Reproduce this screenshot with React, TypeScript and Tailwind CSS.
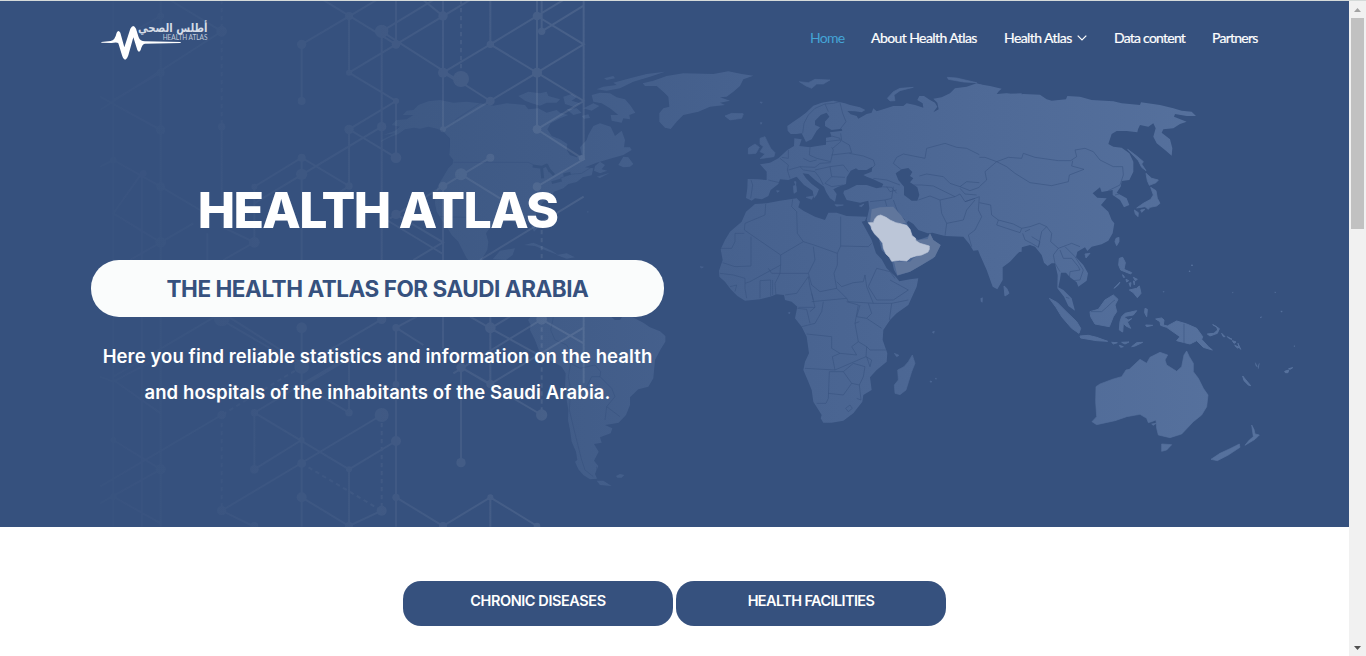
import React from "react";

type Circle = [number, number, number];

const topLines =
  "M40 0V780M125 520V780M182 0V780M365 380V680M322 700V780M463 560V727M605 133V303M605 473V780M747 48V218M747 388V560M845 94V780M888 0V133M888 303V473M1029 0V388M1029 560V780M1171 0V133M1311 0V388M1325 0V94M1451 0V480" +
  "M670 0L888 133M605 133L830 0M845 94L1000 0M845 94L1171 303M1029 218L1083 250M747 218L1110 0M747 218L888 303L747 388L888 473M1029 218L1171 133L1311 218L1029 388M1171 133L1390 0M1311 218L1451 303L1311 388L1451 478L1311 560M1311 218L1451 133L1311 48L1390 0M1325 94L1451 17M970 0L1029 48L1110 0" +
  "M845 380L463 610M463 560L605 473L747 558L700 590M1171 473L870 655M1083 523L1200 595M860 660L1029 762M888 643L1029 727L940 780M1451 590L1140 780M182 727L280 670M182 727L90 780M365 680L463 727L370 780M0 330L365 94L210 0M0 290L182 390M0 150L182 48M40 480L182 560L300 630M0 500L40 480M125 520L40 640L182 727M182 218L40 300";
const bottomLines =
  "M40 170V800M125 170V800M182 170V800M463 458V628M605 203V800M747 290V458M747 628V800M888 203V800M1029 170V265M1083 322V608M1171 170V372M1171 712V800M1451 170V370" +
  "M365 180L605 320L845 178M365 465L0 680M345 170L40 350M385 170L605 310M888 203L950 170M888 203L970 255M1110 170L1171 205L1230 170M1060 340L1325 178L1451 250M1171 205L1325 290M1083 322L1325 465M1083 322L1171 372L1451 203M463 458L747 628L888 543M747 458L605 373L747 290M463 458L605 373M463 628L605 540M605 380L790 270M845 465L365 752L463 800M605 712L747 798L845 752M888 712L1029 798L1171 712L1311 798M40 360L182 460M40 540L182 628M0 730L182 628M0 350L40 365L182 290M40 710L182 790";

const topNodes: Circle[] = [
  [747, 48, 12], [605, 133, 14], [605, 303, 12], [845, 94, 20], [888, 133, 13], [747, 218, 9], [888, 303, 9],
  [747, 388, 14], [845, 380, 14], [888, 473, 16], [1029, 48, 14], [1029, 218, 15], [1083, 237, 24], [1171, 133, 11],
  [1171, 303, 13], [1311, 48, 13], [1325, 94, 11], [1311, 218, 15], [1311, 388, 13], [1029, 388, 9], [1171, 473, 12],
  [1083, 523, 18], [1029, 558, 13], [1311, 560, 13], [1445, 474, 9], [605, 473, 12], [605, 523, 17], [747, 558, 11],
  [463, 560, 9], [463, 727, 16], [888, 643, 14], [365, 94, 16], [365, 380, 11], [182, 48, 10], [182, 218, 12],
  [182, 390, 14], [182, 560, 13], [182, 727, 16], [40, 480, 10], [130, 520, 10],
];
const bottomNodes: Circle[] = [
  [365, 175, 24], [605, 203, 16], [605, 320, 22], [845, 178, 14], [888, 203, 11], [1171, 203, 16], [1325, 178, 16],
  [1083, 322, 14], [1171, 372, 12], [1325, 465, 17], [1083, 608, 14], [888, 373, 10], [747, 458, 11], [463, 458, 11],
  [365, 465, 13], [845, 465, 21], [605, 540, 9], [888, 543, 15], [605, 610, 13], [463, 628, 13], [747, 628, 9],
  [182, 628, 15], [605, 712, 15], [888, 712, 11], [1171, 712, 9], [845, 752, 15], [365, 752, 14], [1029, 798, 12],
  [747, 798, 12], [1311, 798, 10], [463, 798, 12], [40, 710, 10], [40, 540, 9],
];

function Network() {
  return (
    <>
      <mask id="net" maskUnits="userSpaceOnUse" x="0" y="0" width="1349" height="527">
        <g fill="none" stroke="#fff" strokeWidth="6">
          <g transform="translate(100 0) scale(.33333)">
            <path d={topLines} />
            <path d="M365 0V380M1083 0V237M1325 690V780" strokeDasharray="13 11" />
            {topNodes.map(([x, y, r]) => (
              <circle key={`${x}-${y}`} cx={x} cy={y} r={r} fill="#fff" stroke="none" />
            ))}
          </g>
          <g transform="translate(100 260) scale(.33333)">
            <path d={bottomLines} />
            <path d="M365 465V752M845 465V752M605 610L845 752M605 320L365 465M1325 178V465" strokeDasharray="13 11" />
            {bottomNodes.map(([x, y, r]) => (
              <circle key={`${x}-${y}`} cx={x} cy={y} r={r} fill="#fff" stroke="none" />
            ))}
          </g>
        </g>
      </mask>
      <linearGradient id="netFade" gradientUnits="userSpaceOnUse" x1="90" y1="0" x2="590" y2="0">
        <stop offset="0" stopColor="#fff" stopOpacity=".01" />
        <stop offset=".5" stopColor="#fff" stopOpacity=".04" />
        <stop offset="1" stopColor="#fff" stopOpacity=".095" />
      </linearGradient>
      <rect width="1349" height="527" fill="url(#netFade)" mask="url(#net)" />
    </>
  );
}

function WorldMap() {
  return (
    <>
      <mask id="land" maskUnits="userSpaceOnUse" x="0" y="0" width="1349" height="527">
        <g fill="#fff" strokeLinejoin="round">
          {/* North America and Greenland */}
          <g transform="translate(400 60) scale(.33333)">
            <path d="M-57 246L-30 232L-5 222L15 208L42 203L60 206L85 200L105 205L128 212L140 225L150 235L150 262L148 285L160 300L158 312L145 325L130 350L115 375L107 400L105 430L110 455L125 480L140 500L155 525L175 545L190 575L200 595L240 640L300 660L290 610L245 598L262 570L265 545L258 520L272 500L300 488L330 482L350 488L370 478L390 490L402 515L412 505L405 475L415 445L430 425L455 408L462 395L490 385L505 372L530 366L548 352L575 346L580 325L555 322L590 308L630 296L670 285L695 270L690 262L672 262L675 240L665 212L645 228L632 200L600 190L580 198L565 225L560 240L540 262L545 285L530 292L510 285L500 270L502 252L480 238L455 228L442 208L452 190L480 175L505 165L480 158L470 150L440 158L415 145L385 148L375 135L345 132L320 130L280 137L240 130L200 125L160 128L120 120L85 124L55 135L40 150L20 152L8 165L40 165L20 178L-10 180L-25 195L0 200L-15 212L-50 225L-15 220L-55 240Z" />
            <path d="M355 108L385 95L420 100L440 95L445 108L480 118L470 128L440 128L420 137L395 130L375 122ZM490 110L515 102L530 112L515 122L540 130L520 140L495 132ZM500 148L530 145L545 158L520 165ZM590 88L610 80L650 75L640 68L690 55L740 42L795 35L750 50L700 65L660 85L620 92ZM612 55L640 48L645 55L620 60ZM575 105L600 98L630 100L650 112L675 118L690 135L706 158L688 165L690 178L670 175L665 188L635 182L632 165L655 165L630 145L605 130L580 125ZM550 145L580 130L598 138L575 152ZM545 168L565 163L570 174L552 176ZM655 315L670 290L685 292L700 312L690 320L670 322ZM585 318L600 305L615 315L605 328L622 332L600 340L582 332ZM590 350L630 338L600 354Z" />
            <path d="M728 70L760 62L800 48L850 40L940 42L985 34L1025 42L1060 47L1030 58L1020 78L1000 95L980 110L960 112L990 122L960 128L975 135L930 140L895 155L850 165L830 185L812 207L795 203L778 185L778 160L790 145L808 140L805 110L790 95L770 78L735 78ZM975 168L990 162L1030 160L1020 172L990 180ZM1045 265L1060 255L1072 265L1065 280L1045 282Z" />
            <path d="M278 598L300 572L345 565L338 585L318 600ZM372 555L400 548L430 560L455 572L475 585L440 572L405 558ZM470 585L500 580L525 592L500 596ZM562 452L567 456L562 458Z" />
          </g>
          {/* South America */}
          <g transform="translate(540 310) scale(.33333)">
            <path d="M-20 10L-36 30L-28 45L-30 60L-15 90L0 130L30 150L65 170L77 190L75 230L80 270L85 300L84 330L90 360L95 395L108 425L112 450L105 455L115 478L130 495L150 508L172 506L165 492L175 468L162 452L176 425L162 402L185 398L180 382L212 370L217 355L195 345L215 342L236 338L258 315L270 285L270 262L295 238L325 230L340 205L345 150L362 118L376 95L376 78L360 64L330 52L310 38L275 20L250 15L240 30L225 30L215 22L200 10Z" />
            <path d="M170 512L190 512L215 528L180 525ZM228 498L240 492L253 495L245 503L232 503Z" />
          </g>
          {/* Europe, western Asia */}
          <g transform="translate(700 70) scale(.33333)">
            <path d="M262 168L280 155L300 142L318 128L340 107L365 98L400 92L435 100L450 105L480 112L496 120L485 127L465 124L442 123L452 133L470 138L475 146L500 132L515 128L520 115L530 124L552 117L580 108L610 108L620 100L645 105L670 113L668 100L652 90L658 78L672 78L690 90L705 98L712 110L700 127L716 118L712 98L700 86L725 82L750 70L765 55L800 50L830 40L865 50L900 58L890 72L965 70L965 545L850 560L838 540L820 542L808 522L790 500L735 498L697 488L683 490L655 480L640 462L625 452L620 458L632 480L640 500L655 510L683 500L690 490L700 510L722 525L700 565L665 585L630 605L592 617L582 600L575 570L545 540L535 500L510 470L500 450L508 415L505 392L480 398L440 390L430 370L432 362L445 358L470 345L500 345L530 355L545 352L550 342L520 328L500 320L490 315L515 305L517 290L500 300L475 300L468 295L452 302L440 322L438 342L415 350L400 358L410 372L405 395L390 385L378 365L372 350L345 330L325 312L308 310L318 325L335 342L357 358L350 375L342 385L338 362L312 345L290 320L265 330L240 328L235 342L212 360L205 378L185 388L165 385L155 392L138 384L142 355L143 327L175 328L200 330L200 305L180 283L210 278L235 265L262 240L282 228L283 205L305 208L298 228L330 232L352 228L378 224L378 203L395 200L390 187L427 182L425 176L395 180L375 168L375 155L388 140L380 128L362 135L345 152L345 165L360 172L350 182L335 208L318 216L305 190L290 192L272 192L263 182Z" />
            <path stroke="#fff" strokeWidth="2" d="M562 85L580 65L600 55L640 52L600 62L582 75L585 92L570 93ZM742 22L770 24L830 38L790 36L745 28ZM298 35L325 38L345 28L390 30L370 42L350 42L335 55L318 48ZM75 138L95 130L130 132L125 145L90 150ZM180 205L195 200L202 215L212 235L225 248L222 260L180 266L195 252L180 245L190 230L180 222ZM145 235L165 222L178 232L168 250L145 252ZM318 382L340 378L335 388ZM280 348L288 346L290 365L282 370ZM283 335L288 335L287 345ZM405 404L430 405L410 409ZM478 408L492 402L485 410ZM230 362L238 363L232 367ZM180 96L187 97L183 100ZM181 158L186 158L183 163Z" />
            <path fill="#000" d="M587 310L605 298L625 294L637 306L630 318L640 325L630 337L652 352L658 375L652 392L635 392L612 375L612 350L595 330Z" />
          </g>
          {/* Africa */}
          <g transform="translate(700 190) scale(.33333)">
            <path d="M165 42L200 40L240 32L290 25L300 35L295 52L310 62L345 80L375 90L385 68L410 68L440 78L500 80L495 92L485 95L500 122L515 150L528 190L545 208L560 235L585 258L598 274L630 268L655 265L650 290L625 345L590 370L570 390L550 420L548 450L562 490L560 515L530 540L510 562L515 600L490 615L487 635L460 670L430 692L395 698L370 698L362 685L365 675L340 635L335 600L325 575L310 540L315 515L327 490L320 440L305 410L285 385L292 350L275 335L255 330L252 315L230 313L210 320L180 328L135 332L112 318L92 298L75 275L58 260L57 242L68 210L62 178L75 150L90 125L125 95L138 65Z" />
            <path stroke="#fff" strokeWidth="2" d="M637 495L645 520L635 545L618 600L600 614L585 610L583 585L595 570L593 540L612 530L625 515ZM697 426L703 424L701 430ZM690 573L696 575L692 577ZM706 565L709 565L708 568ZM265 368L270 367L268 372ZM583 490L597 496L590 500ZM0 230L10 231L5 234Z" />
          </g>
          {/* Eastern Asia */}
          <g transform="translate(980 70) scale(.33333)">
            <path d="M-6 42L30 48L65 56L45 73L80 70L110 75L130 72L180 74L200 88L215 92L258 88L262 78L300 80L335 90L400 94L425 100L480 105L483 97L540 105L580 115L605 122L635 125L648 138L620 138L585 132L582 140L620 155L600 162L580 175L550 178L545 188L570 208L577 235L575 257L555 240L530 220L520 200L527 175L520 160L505 170L480 165L474 178L472 187L440 183L410 183L395 192L385 222L400 230L425 233L448 250L460 275L460 305L448 330L425 333L422 350L410 368L440 385L448 405L432 412L420 390L398 375L398 360L365 366L360 352L338 370L352 383L380 385L363 405L385 425L395 450L403 460L398 490L385 512L365 523L335 530L322 543L315 532L292 545L288 562L310 585L324 610L320 632L295 650L290 637L270 622L258 608L243 608L240 628L235 652L250 660L275 685L285 722L265 708L252 680L232 655L233 615L225 580L215 580L203 588L192 578L185 555L165 530L150 525L125 532L118 545L90 575L68 592L68 630L52 658L38 650L20 600L0 555L-6 540Z" />
            <path stroke="#fff" strokeWidth="2.5" d="M443 238L470 258L490 275L485 282L498 302L485 292L475 272ZM498 310L515 325L535 330L528 338L508 346L502 332ZM512 352L528 362L532 385L540 400L530 408L510 412L505 418L495 410L470 414L490 400L512 388L520 375ZM482 420L495 418L485 427ZM463 420L475 428L474 440L466 432ZM408 505L417 502L417 515L410 527L405 515ZM315 552L330 550L318 564ZM634 585L638 585L636 588ZM627 603L630 603L629 606Z" />
          </g>
          {/* South-east Asia, Oceania */}
          <g transform="translate(980 220) scale(.33333)">
            <path stroke="#fff" strokeWidth="3" d="M72 198L80 205L87 220L75 228ZM208 235L232 248L262 278L290 305L302 325L297 340L275 325L245 290L228 262ZM300 348L325 346L350 352L383 364L350 362L302 354ZM330 275L355 268L375 240L400 225L414 238L405 255L410 275L400 290L388 320L345 312L332 290ZM395 367L412 368L400 372ZM425 367L447 366L435 372ZM418 376L430 380L422 382ZM455 380L470 368L488 367L465 378ZM425 290L435 280L470 272L460 285L430 290L445 300L455 296L442 306L452 325L438 318L430 310L428 336L418 330L420 305ZM495 265L502 268L500 290L494 278ZM497 315L518 316L500 320ZM402 205L420 186L415 195ZM418 115L428 112L436 128L432 148L455 158L452 162L422 150L416 135ZM448 210L470 205L478 198L483 220L472 233L460 218ZM438 178L446 182L440 186ZM460 172L472 178L466 182ZM447 190L453 188L451 200ZM460 183L464 184L463 195ZM428 164L434 172L430 172ZM527 297L545 294L552 300L550 315L562 318L590 303L620 312L650 325L668 350L665 358L685 380L697 390L670 382L650 362L630 372L590 362L600 350L560 322L542 316L540 305ZM682 342L702 340L713 330L710 320L698 314L718 326L712 340L690 348ZM725 340L735 350L730 350ZM742 350L756 358L748 356ZM757 362L768 366L762 370ZM764 376L778 382L772 384ZM774 370L782 388L776 378ZM788 468L812 497L805 495L792 482ZM914 454L926 450L924 458L916 458ZM926 446L938 443L930 448Z" />
            <path stroke="#fff" strokeWidth="1" d="M2 235L8 233L7 247L3 245ZM826 428L832 440L828 438ZM834 440L838 430L835 446ZM902 273L907 273L905 277ZM840 292L845 290L843 294ZM757 217L760 217L758 219ZM884 216L888 217L885 218ZM942 377L945 378L942 380ZM549 214L553 215L550 217Z" />
            <path stroke="#fff" strokeWidth="2" d="M348 500L360 492L400 477L425 470L438 450L448 448L480 418L500 430L510 412L540 397L563 405L555 420L560 435L590 454L605 440L612 405L620 393L628 410L640 430L640 455L655 475L670 505L684 525L680 560L665 585L640 605L605 642L570 653L535 645L530 625L528 600L515 605L505 608L500 595L480 583L440 590L405 602L350 614L336 605L350 590L347 545ZM545 672L575 674L560 690L545 694ZM515 612L528 610L520 616ZM815 615L822 628L825 642L838 645L825 658L795 676L808 660L820 650ZM778 672L780 682L745 705L712 722L693 718L720 700L750 686Z" />
          </g>
        </g>
        <g fill="none" stroke="#000" strokeOpacity=".55" strokeWidth="3" strokeLinejoin="round">
          <g transform="translate(400 60) scale(.33333)">
            <path d="M160 307H385L400 314M165 180L240 130M112 470L205 472L250 505M480 355L510 343L545 340L580 318" />
            <path stroke="#000" strokeOpacity=".9" strokeWidth="9" d="M398 318L425 322L440 315L450 335M425 325L428 355M448 330L462 345M455 368L485 360M490 345L512 340" />
          </g>
          <g transform="translate(540 310) scale(.33333)">
            <path d="M40 22L32 60L45 90L80 105L95 130L92 160L85 200L92 240L88 300L100 350L115 410L125 450L135 480L160 500M92 160L120 175L165 165L182 185L180 200L215 235L225 260L200 290L240 320M140 230L155 200L180 200M140 230L180 245M200 290L195 330M170 470L172 510" />
          </g>
          <g transform="translate(700 70) scale(.33333)">
            <path d="M308 190L312 160L325 135L345 115L375 102L400 100L420 95M375 102L385 125M420 98L428 130L438 155L420 178M395 198L420 205L422 215L398 235M378 215L420 210M422 190L425 212L448 225L455 248L395 255M448 250L490 258L520 270L525 285L515 295M330 232L328 255L350 265L392 275L400 240L395 232M265 240L265 265L245 262M240 265L265 285L262 300L270 325M265 300L300 290L345 292L360 280L392 278M310 265L330 275L350 270M300 290L310 300L345 305L360 325L370 345M345 300L390 290L430 285L445 305M390 290L395 320L435 322M395 320L375 340L395 350L430 345M153 330L158 345L152 385M205 330L238 338" />
            <path d="M520 325L560 330L600 345M540 350L575 352L590 370M560 350L570 365L590 360M510 395L555 390L575 385L580 350M555 390L560 408M580 390L595 430L615 450M655 390L690 378L720 390L725 430L740 460L735 498M720 390L765 380L780 372L795 395L825 385M740 460L790 450L800 420L825 390M605 300L580 280L590 262L610 252L675 265L680 235L735 220L770 232L800 235L838 254M658 318L680 312L730 320L750 340L780 350L800 335L838 338M640 345L665 345L700 348L765 380M780 350L810 362L838 352M780 355L795 372L830 375M795 395L825 385L838 380L835 420L845 440L825 480L805 495L815 530" />
          </g>
          <g transform="translate(700 190) scale(.33333)">
            <path d="M197 42L195 75L135 100L133 120L242 195L310 155L292 130L290 65L275 50L278 28M133 130H105V155L95 175H62M153 140V228L105 230L68 218M242 195V225L150 275L135 280M310 155L342 165L412 190V225L402 250L410 295L360 305L335 285L325 250L345 210L340 170M422 80V168L505 170L515 160M422 168L412 190M242 225L240 250L325 250M205 235L215 250L240 250M60 250L100 255L135 265V295L140 325M90 290L110 285L105 305M180 325V272L212 270V318M218 270V315M228 318L225 280L240 250M255 315L290 310L325 260L330 290L340 330M295 352L345 352L335 310M410 295L425 310L440 325L335 335M410 275L425 290L460 278L490 275L495 255L500 290L520 340L445 335L440 325M530 235L505 290L530 330L580 330L625 300L570 270M530 235L570 245L585 265M520 340L575 340L625 330M575 340L568 390M505 340L515 370L500 385L470 380L480 345M500 385L545 415M370 335L365 365L345 400L305 410M330 365L345 352M292 355L320 358L330 400M440 335L475 345L465 400L475 455L455 470L470 495L420 490L395 475L395 440L320 432M465 400L478 395M315 535L405 540L397 500L420 490M475 455L500 470L498 500L405 540M500 470L510 480L558 480M498 500L515 510L510 530L500 500M388 545L385 625L378 640L350 640M388 545L430 545L460 520L495 530L490 560L478 585L455 580L430 545M385 610L430 615L455 580M478 585L483 630L470 625M437 655L450 645L457 655L445 665Z" />
          </g>
          <g transform="translate(980 70) scale(.33333)">
            <path d="M-2 262L15 262L50 275L85 262L125 265L130 250L165 262L235 272L272 272L290 260L285 240L315 235L340 245L360 270L400 290L428 290L430 315L420 345L385 362M50 275L80 290L105 310L150 338L215 347L265 335L268 315L312 298L275 288L278 272M50 275L15 305L20 330L-2 350M-2 398L32 405L35 435L55 450L100 462L125 475L120 488L80 475L50 465L55 450M125 475L150 470L178 460L200 470L215 490L212 515L235 535L275 520L300 530M135 485L150 478M128 490L135 510L155 520L175 532L180 515L155 500M200 470L185 485L175 532M235 535L220 555L225 580L240 605M240 540L250 565L275 565L295 590L300 600L270 605L268 625M255 530L285 560L310 600L300 630L280 632M405 375L418 372" />
          </g>
          <g transform="translate(980 220) scale(.33333)">
            <path d="M332 275L365 275L380 262L398 245L405 240M612 312V370M258 232L268 235" />
          </g>
        </g>
      </mask>
      <linearGradient id="landFade" gradientUnits="userSpaceOnUse" x1="380" y1="0" x2="1260" y2="0">
        <stop offset="0" stopColor="#3d5883" />
        <stop offset=".2" stopColor="#415c88" />
        <stop offset=".42" stopColor="#47628f" />
        <stop offset=".7" stopColor="#4f6a97" />
        <stop offset="1" stopColor="#57729e" />
      </linearGradient>
      <rect width="1349" height="527" fill="url(#landFade)" mask="url(#land)" />
      {/* Arabian peninsula */}
      <g transform="translate(700 190) scale(.33333)" strokeLinejoin="round">
        <path fill="#60769c" d="M515 58L540 52L580 50L605 78L618 98L600 102L560 85L540 75L520 100L510 100ZM582 215L600 215L630 215L640 205L660 195L685 185L690 170L650 160L650 150L683 147L690 130L700 150L722 165L705 200L665 225L630 245L592 256Z" />
        <path fill="#bcc6d8" stroke="#bcc6d8" strokeWidth="2" d="M505 98L520 98L525 86L532 78L542 75L558 82L570 90L588 98L605 102L620 106L630 118L636 137L646 144L648 152L660 160L688 168L688 178L684 186L665 195L648 198L632 203L620 213L598 211L575 214L568 202L558 192L550 175L548 160L538 146L524 132L515 118L513 108Z" />
      </g>
    </>
  );
}

function Logo() {
  return (
    <svg className="overflow-visible" width="116" height="60" viewBox="100 2 116 60" role="img" aria-label="Health Atlas">
      <g transform="translate(90 0) scale(.33333)" fill="#fff">
        <path d="M34 126L62 123Q75 121 80 98Q85 88 91 98L103 142L121 86Q130 70 138 86L146 112Q150 124 165 124L272 126V129L165 131Q156 132 152 150Q147 160 142 150L130 112L115 166Q105 192 96 166L85 130Q82 126 65 129L34 128Z" />
      </g>
      <text x="138" y="32" textLength="69.5" lengthAdjust="spacingAndGlyphs" fill="#d5dce6" fontSize="12" fontWeight="700" className="font-['DejaVu_Sans',sans-serif]">
        أطلس الصحي
      </text>
      <text x="162.7" y="39.5" textLength="44.8" lengthAdjust="spacingAndGlyphs" fill="#c3ccda" fontSize="6.8" className="font-[Lato,sans-serif]">
        HEALTH ATLAS
      </text>
    </svg>
  );
}

function Nav() {
  return (
    <nav className="flex gap-[27px] whitespace-nowrap font-[Lato,sans-serif] text-[14px] leading-5 tracking-[-0.57px] text-white [-webkit-text-stroke:0.2px_currentColor]">
      <a className="w-[34px] text-[#44a4d6] tracking-[-0.75px] [-webkit-text-stroke:0px]">Home</a>
      <a className="w-[106px]">About Health Atlas</a>
      <a className="flex w-[83px] items-center justify-between">
        Health Atlas
        <svg width="10" height="6" viewBox="0 0 10 6" fill="none" stroke="currentColor" strokeWidth="1.2">
          <path d="M.7.7L5 5L9.3.7" />
        </svg>
      </a>
      <a className="w-[71px] tracking-[-0.76px]">Data content</a>
      <a className="w-[46px] tracking-[-0.75px]">Partners</a>
    </nav>
  );
}

export default function App() {
  return (
    <div className="flex h-[656px] w-[1366px] flex-col overflow-hidden border-t border-[#d5dad9] bg-white font-[Inter,sans-serif]">
      <div className="flex min-h-0 flex-1">
        <main className="flex w-[1349px] flex-col">
          <section className="relative h-[526px] bg-[#36517e]">
            <svg className="absolute -top-px left-0" width="1349" height="527" viewBox="0 0 1349 527" aria-hidden="true">
              <WorldMap />
              <Network />
            </svg>
            <div className="relative flex h-full flex-col">
              <header className="flex h-[61px] justify-between pr-[91px] pl-[100px] pt-px">
                <Logo />
                <div className="pt-[26px]">
                  <Nav />
                </div>
              </header>
              <div className="ml-[91px] mt-[118px] flex w-[573px] flex-col items-center whitespace-nowrap text-center text-white">
                <h1 className="text-[50px] font-extrabold leading-[60px] tracking-[-1.6px]">HEALTH ATLAS</h1>
                <h2 className="mt-5 flex h-[57px] w-full items-center justify-center rounded-[28px] bg-[#fafcfc] text-[22.5px] font-bold tracking-[-0.46px] text-[#36517e]">
                  THE HEALTH ATLAS FOR SAUDI ARABIA
                </h2>
                <p className="mt-[21px] text-[18.5px] font-semibold leading-9 tracking-[0.1px]">
                  Here you find reliable statistics and information on the health
                  <br />
                  and hospitals of the inhabitants of the Saudi Arabia.
                </p>
              </div>
            </div>
          </section>
          <section className="flex justify-center gap-[3px] pt-[54px] text-[14.5px] font-semibold leading-5 text-white">
            <button className="h-[45px] w-[270px] rounded-[18px] bg-[#36517e] pb-[5px] tracking-[-0.42px]">CHRONIC DISEASES</button>
            <button className="h-[45px] w-[270px] rounded-[18px] bg-[#36517e] pb-[5px] tracking-[-0.6px]">HEALTH FACILITIES</button>
          </section>
        </main>
        <aside className="flex w-[17px] flex-col items-center justify-between bg-[#f1f1f1]">
          <div className="flex flex-col items-center">
            <svg className="h-[17px]" width="7" height="17" viewBox="0 0 7 17">
              <path d="M3.5 7L7 11H0Z" fill="#a3a3a3" />
            </svg>
            <div className="h-[211px] w-[13px] bg-[#c1c1c1]" />
          </div>
          <svg width="7" height="17" viewBox="0 0 7 17">
            <path d="M3.5 11L7 7H0Z" fill="#505050" />
          </svg>
        </aside>
      </div>
    </div>
  );
}
